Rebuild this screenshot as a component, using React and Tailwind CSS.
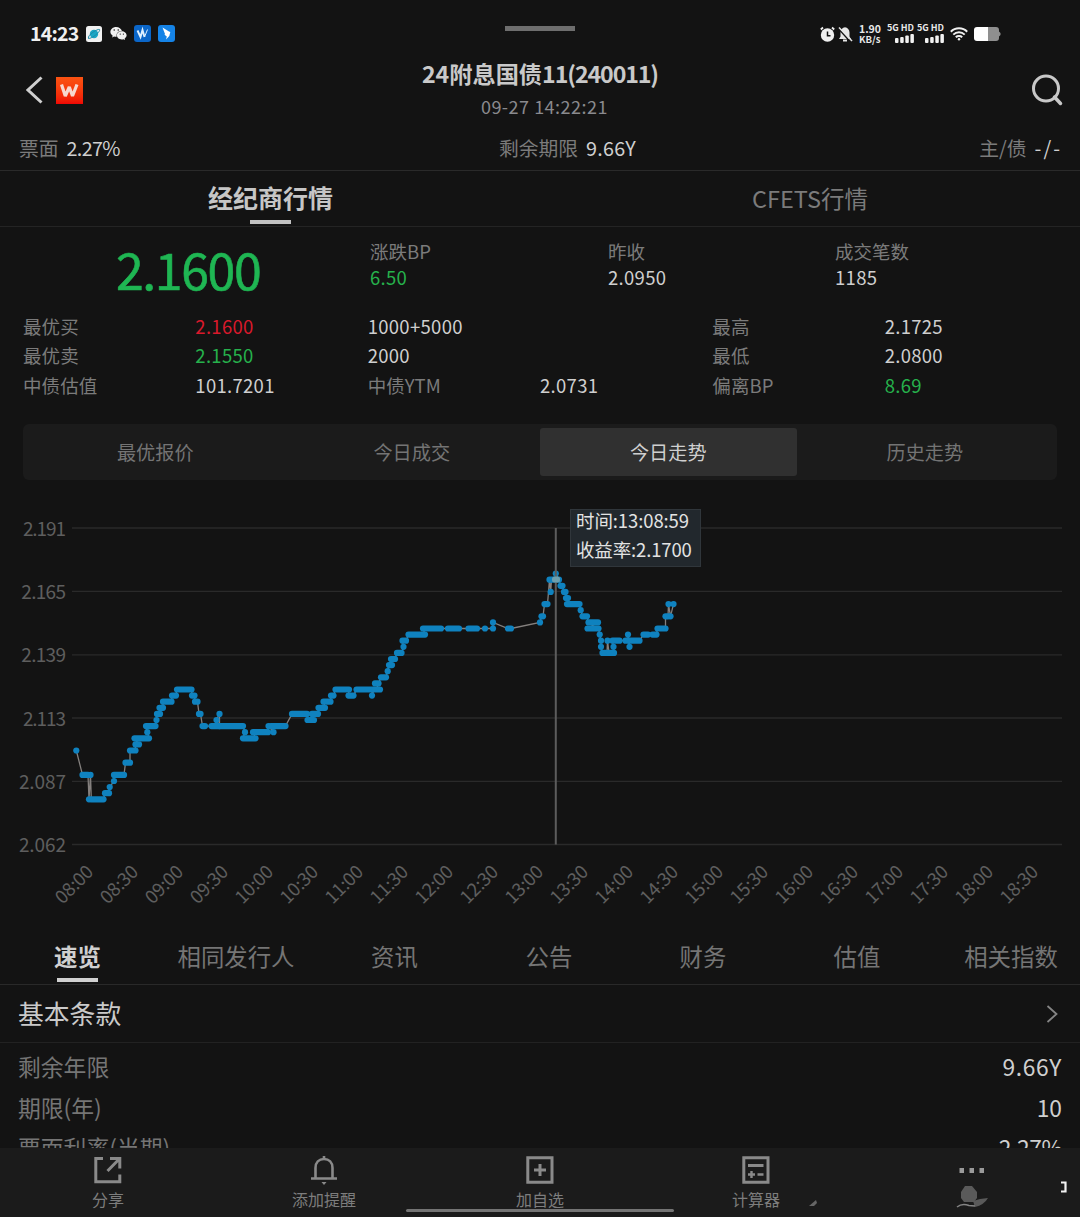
import { FaWeixin } from "react-icons/fa";

const heroStats = [
  { label: "涨跌BP", value: "6.50", color: "text-[#26b14c]", width: "w-[238px]" },
  { label: "昨收", value: "2.0950", color: "text-[#cfcfcf]", width: "w-[227px]" },
  { label: "成交笔数", value: "1185", color: "text-[#cfcfcf]", width: "w-[200px]" },
];

const quoteCells = [
  { text: "最优买", color: "text-[#7b7b7b]" },
  { text: "2.1600", color: "text-[#d8192b]", num: true },
  { text: "1000+5000", color: "text-[#cfcfcf]", num: true },
  { text: "", color: "" },
  { text: "最高", color: "text-[#7b7b7b]" },
  { text: "2.1725", color: "text-[#cfcfcf]", num: true },
  { text: "最优卖", color: "text-[#7b7b7b]" },
  { text: "2.1550", color: "text-[#26b14c]", num: true },
  { text: "2000", color: "text-[#cfcfcf]", num: true },
  { text: "", color: "" },
  { text: "最低", color: "text-[#7b7b7b]" },
  { text: "2.0800", color: "text-[#cfcfcf]", num: true },
  { text: "中债估值", color: "text-[#7b7b7b]" },
  { text: "101.7201", color: "text-[#cfcfcf]", num: true },
  { text: "中债YTM", color: "text-[#7b7b7b]" },
  { text: "2.0731", color: "text-[#cfcfcf]", num: true },
  { text: "偏离BP", color: "text-[#7b7b7b]" },
  { text: "8.69", color: "text-[#26b14c]", num: true },
];

const segments = ["最优报价", "今日成交", "今日走势", "历史走势"];

const infoTabs = [
  { label: "速览", width: "w-[155px]" },
  { label: "相同发行人", width: "w-[162px]" },
  { label: "资讯", width: "w-[155px]" },
  { label: "公告", width: "w-[154px]" },
  { label: "财务", width: "w-[154px]" },
  { label: "估值", width: "w-[154px]" },
  { label: "相关指数", width: "w-[154px]" },
];

const terms = [
  { label: "剩余年限", value: "9.66Y", tracking: "tracking-[0.6px]" },
  { label: "期限(年)", value: "10", tracking: "tracking-[0px]" },
  { label: "票面利率(当期)", value: "2.27%", tracking: "tracking-[-0.4px]" },
];

const yTicks = [
  { label: "2.191", y: 48, spacing: -1.1 },
  { label: "2.165", y: 111.4, spacing: -0.7 },
  { label: "2.139", y: 174.8, spacing: -0.7 },
  { label: "2.113", y: 238, spacing: -1.1 },
  { label: "2.087", y: 301.4, spacing: -0.1 },
  { label: "2.062", y: 364.5, spacing: -0.1 },
];

const xTicks = [
  "08:00", "08:30", "09:00", "09:30", "10:00", "10:30", "11:00", "11:30",
  "12:00", "12:30", "13:00", "13:30", "14:00", "14:30", "15:00", "15:30",
  "16:00", "16:30", "17:00", "17:30", "18:00", "18:30",
];

// [steps of 0.0025 above 2.08, first x, last x]
const runs = [
  [8, 76.3, 76.3], [4, 82.5, 88], [0, 89, 89], [4, 90.5, 90.5], [0, 91.3, 103.5],
  [1, 105, 109], [2, 109.7, 109.7], [3, 114, 114], [4, 114, 124], [6, 125.5, 130],
  [8, 130, 135.5], [9, 135.5, 139], [10, 134.5, 149], [11, 147.3, 147.3],
  [12, 146, 155.5], [13, 156.5, 156.5], [14, 157, 160], [15, 159.5, 163],
  [16, 163, 171.5], [17, 172, 176], [18, 177, 191.5], [17, 192, 194.5],
  [16, 195, 197.5], [14, 199, 200.5], [12, 202.5, 205], [12, 211.5, 219.5],
  [13, 216.5, 216.5], [14, 219.5, 219.5], [12, 219.5, 243], [11, 245, 245],
  [10, 243, 255.5], [11, 253, 268], [12, 268.5, 268.5], [11, 273.5, 273.5],
  [12, 271, 285.5], [14, 292, 307], [13, 307.5, 314], [14, 312, 318],
  [15, 318.5, 325], [16, 323.5, 330.5], [17, 331, 333.5], [18, 335.5, 349],
  [17, 348.5, 353.5], [18, 356.5, 372], [17, 372, 372], [18, 374, 380],
  [19, 375, 378.5], [20, 381, 386], [21, 387.7, 387.7], [22, 389, 392],
  [23, 391, 395], [24, 397, 401.5], [25, 403.5, 403.5], [26, 402.5, 406],
  [27, 408.5, 425], [28, 423, 441], [28, 448, 459], [28, 468.5, 477],
  [28, 485, 485], [28, 493, 493], [29, 493, 493], [28, 508, 511], [29, 540, 540],
  [30, 541.5, 543], [32, 544.5, 547.5], [36, 549.5, 549.5], [34, 550.7, 550.7],
  [36, 551.5, 556], [37, 555.8, 555.8], [36, 559, 559], [35, 560.5, 562.5],
  [34, 564, 565.5], [33, 566, 568], [32, 567, 579.5], [31, 580.7, 580.7],
  [30, 582.5, 587], [29, 588.5, 598], [28, 587.5, 598.5], [27, 599.7, 599.7],
  [26, 601, 601], [25, 601, 601], [24, 602.5, 607], [26, 607.5, 607.5],
  [24, 609, 614], [25, 613.5, 613.5], [26, 612.5, 619.5], [26, 625.5, 628],
  [27, 628, 628], [25, 629.5, 629.5], [26, 629.5, 639.5], [27, 643.5, 648],
  [27, 652.5, 656.5], [28, 657.5, 665.5], [30, 665.5, 668], [32, 668.5, 668.5],
  [30, 670.5, 670.5], [32, 673.5, 673.5],
];

const levelY = (n) => 319.3 - n * 6.1;

function AppBadges() {
  return (
    <div className="flex items-center gap-[8px]">
      <svg width="16" height="16" viewBox="0 0 16 16">
        <rect width="16" height="16" rx="2.5" fill="#f1f1f1" />
        <circle cx="8" cy="8" r="4.200" fill="#1ba6c4" />
        <path d="M2.500 12.500C1 9 12 2.500 13.500 3.500S8 12 2.500 12.500" stroke="#1b8aa8" strokeWidth="1" fill="none" />
      </svg>
      <FaWeixin size={17} color="#f0f0f0" />
      <svg width="17" height="17" viewBox="0 0 17 17" className="-ml-px">
        <rect width="17" height="17" rx="3" fill="#0b66c8" />
        <path d="M3.500 5.500L6.500 12L8.500 5L10.500 12" stroke="#dff0ff" strokeWidth="1.900" fill="none" />
        <path d="M10.500 12L13.500 4.500" stroke="#dff0ff" strokeWidth="1" />
      </svg>
      <svg width="17" height="17" viewBox="0 0 17 17" className="-ml-px">
        <rect width="17" height="17" rx="3" fill="#1583e6" />
        <path d="M4.500 2.500L11 6.500L12.300 7L11.300 11L8 14.500L8.800 11.500L6.500 9.800L7 9Z" fill="#fff" />
      </svg>
    </div>
  );
}

function Signal() {
  return (
    <div className="flex w-[26px] flex-col items-end gap-[3px]">
      <span className="text-[9px] leading-[7px] font-bold whitespace-nowrap text-[#e8e8e8]">5G HD</span>
      <svg width="19" height="9" viewBox="0 0 19 9" fill="#f2f2f2">
        <rect x="0" y="4" width="3.500" height="5" rx="1" />
        <rect x="5.200" y="3" width="3.500" height="6" rx="1" />
        <rect x="10.300" y="1.500" width="3.500" height="7.500" rx="1" />
        <rect x="15.400" y="0" width="3.500" height="9" rx="1" />
      </svg>
    </div>
  );
}

function StatusBar() {
  return (
    <div className="flex h-[62px] items-start pt-[21px] pr-[79px] pl-[30px]">
      <div className="flex h-[25px] w-[475px] items-center gap-[7px]">
        <span className="w-[49px] text-[19.500px] leading-[24px] font-bold tracking-[-0.8px] text-[#efefef]">
          <span className="relative -top-px">14:23</span>
        </span>
        <AppBadges />
      </div>
      <div className="mt-[5px] h-[5px] w-[70px] bg-[#6e6e6e]" />
      <div className="flex h-[25px] flex-1 items-center justify-end">
        <svg width="15" height="16" viewBox="0 0 15 16">
          <circle cx="7.500" cy="9" r="6.700" fill="#f0f0f0" />
          <path d="M0.800 3.500L3 1.500M14.200 3.500L12 1.500" stroke="#f0f0f0" strokeWidth="1.800" />
          <path d="M7.500 5.500V9.700H10.500" stroke="#131313" strokeWidth="1.500" fill="none" />
        </svg>
        <svg width="15" height="16" viewBox="0 0 15 16" className="ml-[3px]">
          <path d="M1 13L2.500 10.500V6.500C2.500 3.500 4.500 1.500 7 1.200C9.500 1.500 11.500 3.500 11.500 6.500V10.500L13 13Z" fill="#e6e6e6" />
          <path d="M5 14.500H9" stroke="#e6e6e6" strokeWidth="2" />
          <path d="M0 2L12 15.500" stroke="#131313" strokeWidth="1.500" />
          <path d="M1 1.500L14 15" stroke="#e6e6e6" strokeWidth="1.500" />
        </svg>
        <div className="ml-[6px] w-[24px] font-bold whitespace-nowrap text-[#e8e8e8]">
          <div className="text-[10.500px] leading-[11px]">1.90</div>
          <div className="text-[9.500px] leading-[10px]">KB/s</div>
        </div>
        <div className="ml-[5px] flex gap-[4px]">
          <Signal />
          <Signal />
        </div>
        <svg width="18" height="14" viewBox="0 0 18 14" className="ml-[6px]" fill="none" stroke="#f0f0f0" strokeWidth="2">
          <path d="M0.800 4.800C5.300 0.200 12.700 0.200 17.200 4.800" />
          <path d="M3.300 7.600C6.500 4.500 11.500 4.500 14.700 7.600" />
          <path d="M5.800 10.300C7.500 8.700 10.500 8.700 12.200 10.300" />
          <circle cx="9" cy="12.300" r="1.200" fill="#f0f0f0" stroke="none" />
        </svg>
        <svg width="27" height="14" viewBox="0 0 27 14" className="mt-px ml-[6px]">
          <path d="M14 0H22Q25 0 25 3V4.500L26.500 6V8L25 9.500V11Q25 14 22 14H14Z" fill="#8f8f8f" />
          <path d="M14 0H3Q0 0 0 3V11Q0 14 3 14H14Z" fill="#fff" />
        </svg>
      </div>
    </div>
  );
}

function Header() {
  return (
    <div className="flex h-[66px] items-start justify-between pr-[17px] pl-[26px]">
      <div className="flex w-[191px] items-center gap-[13px] pt-[14px]">
        <svg width="17" height="28" viewBox="0 0 17 28" fill="none">
          <path d="M15.500 1.500L2 14L15.500 26.500" stroke="#d0d0d0" strokeWidth="3" />
        </svg>
        <div className="flex size-[27px] items-center justify-center bg-linear-to-b from-[#fb5312] to-[#f00505]">
          <svg width="19" height="13" viewBox="0 0 19 13" fill="none">
            <path d="M1.500 0.500L5.300 12L9.300 3L12.500 12L17 0.500" stroke="#f7d9d0" strokeWidth="3.200" strokeLinejoin="bevel" />
          </svg>
        </div>
      </div>
      <div className="flex flex-col items-center">
        <h1 className="h-[28px] text-[23.200px] leading-[23px] font-bold whitespace-nowrap text-[#c9c9c9]">
          24附息国债<span className="tracking-[-1.1px]">11(240011)</span>
        </h1>
        <div className="mt-[3px] pl-[9px] text-[18px] leading-[27px] tracking-[0.5px] text-[#8a8a8e]">09-27 14:22:21</div>
      </div>
      <div className="flex w-[200px] justify-end pt-[12px]">
        <svg width="32" height="32" viewBox="0 0 32 32" fill="none" stroke="#c8c8c8" strokeWidth="3">
          <circle cx="15" cy="14.500" r="12.500" />
          <path d="M23.500 23L29.500 29.500" strokeWidth="3.500" strokeLinecap="round" />
        </svg>
      </div>
    </div>
  );
}

function Fact({ label, value, tracking }) {
  return (
    <div className="flex gap-[8px]">
      <span className="text-[#7b7b7b]">{label}</span>
      <span className={`text-[#cfcfcf] ${tracking}`}>{value}</span>
    </div>
  );
}

function TrendChart() {
  const points = runs
    .flatMap(([n, from, to]) => [`${from},${levelY(n)}`, `${to},${levelY(n)}`])
    .join(" ");

  return (
    <div className="relative h-[445px]">
      <svg width="1080" height="445" viewBox="0 0 1080 445" className="block">
        {yTicks.map((tick) => (
          <g key={tick.label}>
            <line x1="72" x2="1062" y1={tick.y} y2={tick.y} stroke="#2a2a2a" strokeWidth="1.300" />
            <text
              x={66 + tick.spacing}
              y={tick.y + 7.500}
              textAnchor="end"
              fontSize="19"
              letterSpacing={tick.spacing}
              fill="#5e5e5e"
            >
              {tick.label}
            </text>
          </g>
        ))}
        {xTicks.map((label, i) => (
          <text
            key={label}
            x="0"
            y="6.500"
            textAnchor="middle"
            fontSize="18.500"
            letterSpacing="-0.300"
            fill="#5e5e5e"
            transform={`translate(${74 + i * 45} 404.500) rotate(-45)`}
          >
            {label}
          </text>
        ))}
        <polyline points={points} fill="none" stroke="#84807e" strokeWidth="1.300" />
        {runs.map(([n, from, to], i) => (
          <line
            key={i}
            x1={from}
            x2={to + 0.01}
            y1={levelY(n)}
            y2={levelY(n)}
            stroke="#0f82bf"
            strokeWidth="6.200"
            strokeLinecap="round"
          />
        ))}
        <line x1="555.800" x2="555.800" y1="48" y2="364.500" stroke="#5c5c5c" strokeWidth="2" />
        <rect x="552" y="96.500" width="8" height="6" rx="2.500" fill="#6d9fae" />
      </svg>
      <div className="absolute top-[29px] left-[570px] h-[58px] w-[131px] border border-[#30363b] bg-[#22282d] pl-[5px] text-[18.500px] leading-[28.500px] whitespace-nowrap text-[#e3e3e3]">
        <div className="-mt-[4px] tracking-[-0.1px]">时间:13:08:59</div>
        <div className="tracking-[-0.150px]">收益率:2.1700</div>
      </div>
    </div>
  );
}

function NavItem({ label, children }) {
  return (
    <div className="flex flex-1 flex-col items-center pt-[7px]">
      <svg width="30" height="30" viewBox="0 0 30 30" fill="none" stroke="#8a8a8a" strokeWidth="3">
        {children}
      </svg>
      <span className="mt-[2px] text-[16px] leading-[24px] text-[#7d7d7d]">{label}</span>
    </div>
  );
}

function BottomNav() {
  return (
    <div className="relative z-10 flex h-[69px] shrink-0 bg-[#1b1b1b]">
      <NavItem label="分享">
        <path d="M10 3.500H2.800V26.800H26.800V19.500" />
        <path d="M17 3.500H26.800V13.500M26 4.300L14.500 16" />
      </NavItem>
      <NavItem label="添加提醒">
        <path d="M6.500 23V13C6.500 7.500 10 4 15 4S23.500 7.500 23.500 13V23" strokeWidth="2.600" />
        <path d="M2 23.500H28M15 1V4" strokeWidth="2.600" />
        <path d="M12.500 27H17.500L15 30Z" fill="#8a8a8a" stroke="none" />
      </NavItem>
      <NavItem label="加自选">
        <path d="M2.800 2.800H27V27.300H2.800ZM9 15H21M15 9V21" />
      </NavItem>
      <NavItem label="计算器">
        <path d="M2.800 2.800H27V27.300H2.800ZM7 10.500H22.500" />
        <path d="M7 19.500H14M10.500 16V23M16.500 19.500H22.500" strokeWidth="2.400" />
      </NavItem>
      <div className="flex flex-1 flex-col items-center pt-[20px]">
        <svg width="26" height="5" viewBox="0 0 26 5" fill="#9a9a9a">
          <rect width="4.500" height="5" x="0.500" />
          <rect width="4.500" height="5" x="10.500" />
          <rect width="4.500" height="5" x="20.500" />
        </svg>
        <svg width="34" height="24" viewBox="0 0 34 24" className="mt-[12px]" fill="#5a5a5a">
          <path d="M10 1H17L22 7V13L19 17H9L6 13V7Z" />
          <path d="M18 16L25 14L33 13Q29 20 20 22Z" />
          <path d="M2 22Q7 18 14 20.500L20 21" stroke="#858585" strokeWidth="1.500" fill="none" />
        </svg>
      </div>
      <svg width="10" height="8" viewBox="0 0 10 8" className="absolute top-[51px] left-[809px]">
        <path d="M0 7L7 1L8 4L5 7Z" fill="#666" />
      </svg>
      <svg width="7" height="12" viewBox="0 0 7 12" className="absolute top-[33px] left-[1061px]">
        <path d="M0 1.500H4.500V10.500H0" stroke="#f2f2f2" strokeWidth="2.200" fill="none" />
      </svg>
      <div className="absolute bottom-[5px] left-[406px] h-[3px] w-[268px] rounded-full bg-[#747474]" />
    </div>
  );
}

export default function App() {
  return (
    <div className="flex h-[1217px] w-[1080px] flex-col overflow-hidden bg-[#131313] font-['Noto_Sans_CJK_SC',sans-serif] text-[#cfcfcf]">
      <StatusBar />
      <Header />

      <div className="flex h-[43px] shrink-0 items-center justify-between border-b border-[#2a2a2a] pr-[18px] pb-[3px] pl-[19px] text-[19.800px]">
        <div className="flex-1">
          <Fact label="票面" value="2.27%" tracking="tracking-[-0.7px]" />
        </div>
        <div className="ml-[54px]">
          <Fact label="剩余期限" value="9.66Y" tracking="tracking-[0.2px]" />
        </div>
        <div className="flex flex-1 justify-end">
          <Fact label="主/债" value="-/-" tracking="tracking-[2px]" />
        </div>
      </div>

      <div className="flex h-[56px] shrink-0 border-b border-[#242424]">
        <div className="flex flex-1 flex-col items-center">
          <span className="h-[49px] pl-px text-[25px] leading-[53px] font-bold text-[#c6c6c6]">经纪商行情</span>
          <div className="h-[4px] w-[41px] bg-[#c2c2c2]" />
        </div>
        <div className="flex-1 text-center text-[23.500px] leading-[54px] text-[#7b7b7b]">CFETS行情</div>
      </div>

      <div className="flex h-[85px] shrink-0">
        <div className="w-[370px] pl-[116px] text-[50px] leading-[82px] tracking-[-1.400px] text-[#1fb653] [-webkit-text-stroke:0.6px_#1fb653]">
          2.1600
        </div>
        {heroStats.map((stat) => (
          <div key={stat.label} className={`${stat.width} pt-[11px] text-[18.500px] leading-[26px]`}>
            <div className="text-[#7b7b7b]">{stat.label}</div>
            <div className={`${stat.color} tracking-[0.3px]`}>{stat.value}</div>
          </div>
        ))}
      </div>

      <div className="grid h-[112px] shrink-0 auto-rows-[29.400px] grid-cols-6 px-[23px] text-[18.500px] leading-[29px]">
        {quoteCells.map((cell, i) => (
          <div key={i} className={`${cell.color} ${cell.num ? "tracking-[0.3px]" : "tracking-[0.1px]"}`}>
            {cell.text}
          </div>
        ))}
      </div>

      <div className="mx-[23px] flex h-[56px] shrink-0 rounded-[6px] bg-[#1b1b1b] p-[4px]">
        {segments.map((label) => (
          <div
            key={label}
            className={`flex-1 rounded-[3px] text-center text-[19.200px] leading-[48px] ${
              label === "今日走势" ? "bg-[#303030] text-[#cfcfcf]" : "text-[#747474]"
            }`}
          >
            {label}
          </div>
        ))}
      </div>

      <TrendChart />

      <div className="flex h-[60px] shrink-0 border-b border-[#292929]">
        {infoTabs.map((tab, i) => (
          <div key={tab.label} className={`${tab.width} flex shrink-0 flex-col items-center`}>
            <span
              className={`h-[53px] text-[23.400px] leading-[62px] ${
                i === 0 ? "font-bold text-[#d0d0d0]" : "text-[#757575]"
              }`}
            >
              {tab.label}
            </span>
            {i === 0 && <div className="h-[4px] w-[41px] bg-[#d0d0d0]" />}
          </div>
        ))}
      </div>

      <div className="flex h-[58px] shrink-0 items-center justify-between border-b border-[#222] pr-[22px] pl-[18px]">
        <h2 className="text-[25.800px] text-[#cacaca]">基本条款</h2>
        <svg width="12" height="18" viewBox="0 0 12 18" fill="none">
          <path d="M1.500 1L10.500 9L1.500 17" stroke="#858585" strokeWidth="1.800" />
        </svg>
      </div>

      <div className="h-[105px] shrink-0 overflow-hidden pt-[4px] pr-[18px] pl-[18px]">
        {terms.map((term) => (
          <div key={term.label} className="flex h-[40.500px] items-center justify-between text-[22.800px]">
            <span className="text-[#757575]">{term.label}</span>
            <span className={`text-[#cfcfcf] ${term.tracking}`}>{term.value}</span>
          </div>
        ))}
      </div>

      <BottomNav />
    </div>
  );
}
